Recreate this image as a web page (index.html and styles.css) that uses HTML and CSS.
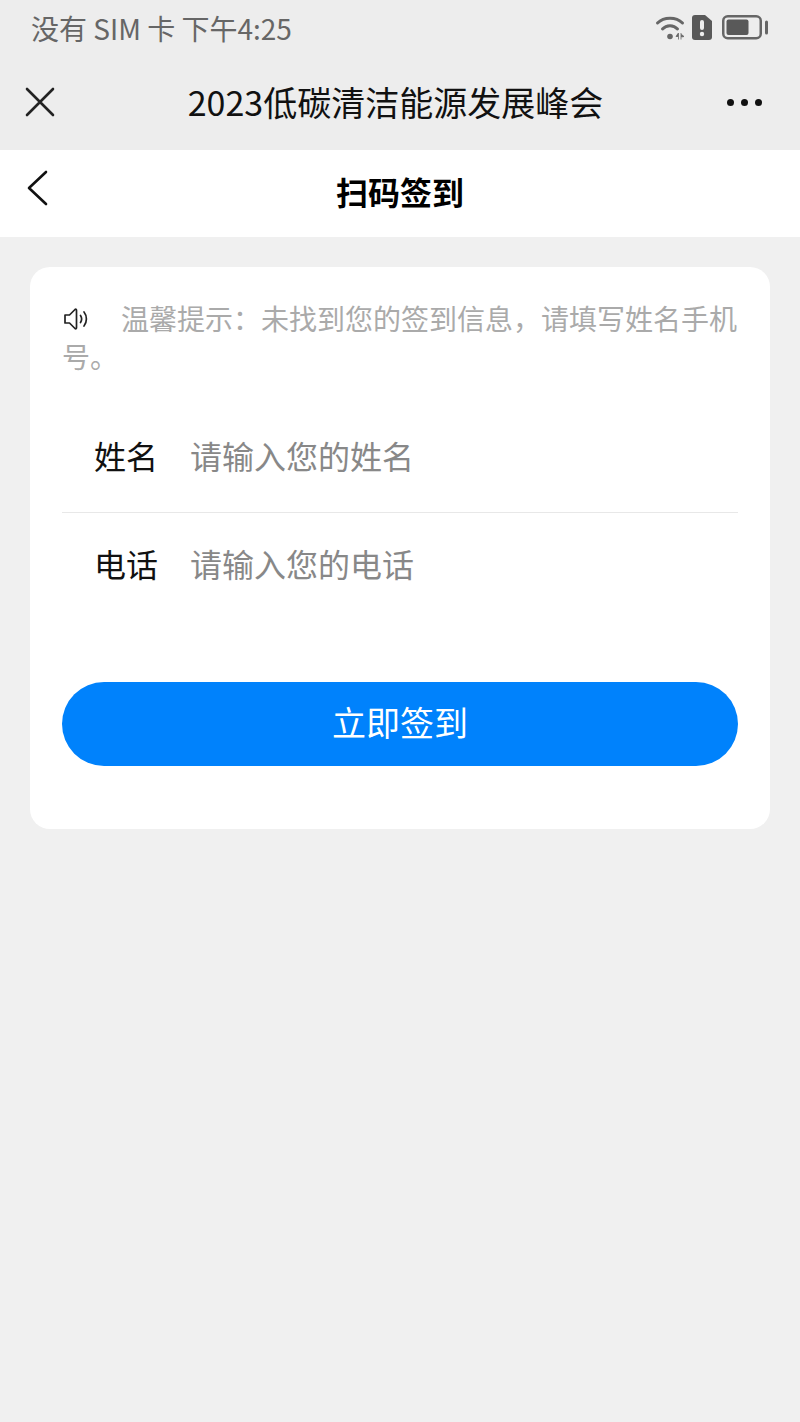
FILE: index.html
```html
<!DOCTYPE html>
<html lang="zh-cn">

<head>
  <meta charset="UTF-8">
  <title>扫码签到</title>
  <link rel="stylesheet" href="styles.css">
</head>

<body>
  <div class="top-bar">
    <div class="status-bar">
      <span class="status-text">没有 SIM 卡 下午4:25</span>
      <div class="status-icons">
        <svg class="icon-wifi" width="30" height="25" viewBox="0 0 30 25">
          <path d="M2.500 8C9 1.500 21 1.500 27.500 8" fill="none" stroke="#666" stroke-width="3" stroke-linecap="round"/>
          <path d="M7.500 14C11.500 9.500 18.500 9.500 22.500 14" fill="none" stroke="#666" stroke-width="3" stroke-linecap="round"/>
          <circle cx="15" cy="21.500" r="2.800" fill="#666"/>
          <path d="M23.500 18v6.500M23 21.500h-2l2-3zM26 18v6.500M26.500 19.500l2.500 2-2.500 .5z" fill="#666" stroke="#666" stroke-width=".8"/>
        </svg>
        <svg class="icon-sim" width="20" height="25" viewBox="0 0 20 25">
          <path d="M3 0h10l7 6v16a3 3 0 0 1-3 3H3a3 3 0 0 1-3-3V3a3 3 0 0 1 3-3z" fill="#595959"/>
          <rect x="8" y="5" width="4" height="10" rx="2" fill="#eee"/>
          <circle cx="10" cy="19" r="2.200" fill="#eee"/>
        </svg>
        <svg class="icon-battery" width="46" height="25" viewBox="0 0 46 25">
          <rect x="1.250" y="1.250" width="37.500" height="22" rx="4.500" fill="none" stroke="#666" stroke-width="2.500"/>
          <rect x="4.500" y="4.500" width="22" height="15.500" rx="2" fill="#595959"/>
          <rect x="43" y="5.500" width="3" height="14" rx="1.500" fill="#666"/>
        </svg>
      </div>
    </div>
    <div class="title-bar">
      <svg class="icon-close" width="30" height="30" viewBox="0 0 30 30">
        <path d="M2 2L28 28M28 2L2 28" fill="none" stroke="#222" stroke-width="2.600" stroke-linecap="round"/>
      </svg>
      <h1 class="app-title">2023低碳清洁能源发展峰会</h1>
      <div class="more-dots"><i></i><i></i><i></i></div>
    </div>
  </div>

  <div class="page-head">
    <svg class="icon-back" width="22" height="36" viewBox="0 0 22 36">
      <path d="M20 2L3 18L20 34" fill="none" stroke="#111" stroke-width="2.600" stroke-linecap="round" stroke-linejoin="round"/>
    </svg>
    <h2 class="page-title">扫码签到</h2>
  </div>

  <div class="card">
    <p class="notice">
      <svg class="icon-sound" width="26" height="26" viewBox="0 0 26 26">
        <path d="M2 9h4.500L12 3.500c.8-.6 1.500-.3 1.500 .7v17.600c0 1-.7 1.300-1.500 .7L6.500 17H2z" fill="none" stroke="#222" stroke-width="1.700" stroke-linejoin="round"/>
        <path d="M17.500 9.500c1.300 2 1.300 5 0 7M21 6c3.200 4 3.200 10 0 14" fill="none" stroke="#222" stroke-width="1.700" stroke-linecap="round"/>
      </svg>温馨提示：未找到您的签到信息，请填写姓名手机号。
    </p>

    <div class="form-row row-name">
      <label for="userName">姓名</label>
      <input id="userName" type="text" placeholder="请输入您的姓名">
    </div>
    <div class="form-row">
      <label for="userPhone">电话</label>
      <input id="userPhone" type="text" placeholder="请输入您的电话">
    </div>

    <button class="sign-btn">立即签到</button>
  </div>
</body>

</html>
```

FILE: styles.css
```css
body {
  margin: 0;
  padding: 0;
  height: 1422px;
  overflow: hidden;
  background-color: #f0f0f0;
  font-family: "Noto Sans CJK SC", "Liberation Sans", sans-serif;
}

.top-bar {
  height: 150px;
  background-color: #ededed;
}

.status-bar {
  display: flex;
  justify-content: space-between;
  align-items: center;
  height: 56px;
  padding: 0 32px 0 31px;
}

.status-text {
  font-size: 28px;
  line-height: 1;
  color: #666;
}

.status-icons {
  display: flex;
  align-items: center;
  gap: 7px;
  margin-bottom: 2px;
}

.icon-battery {
  margin-left: 3px;
}

.title-bar {
  display: flex;
  justify-content: space-between;
  align-items: center;
  height: 92px;
  padding: 0 38px 0 25px;
}

.app-title {
  margin: 0 0 0 9px;
  font-size: 34px;
  font-weight: 400;
  line-height: 1;
  color: #111;
}

.more-dots {
  display: flex;
  gap: 7px;
}

.more-dots i {
  width: 7px;
  height: 7px;
  border-radius: 50%;
  background-color: #111;
}

.page-head {
  position: relative;
  display: flex;
  justify-content: center;
  align-items: center;
  box-sizing: border-box;
  height: 87px;
  padding-bottom: 6px;
  background-color: #fff;
}

.icon-back {
  position: absolute;
  left: 26px;
  top: 20px;
}

.page-title {
  margin: 0;
  font-size: 32px;
  font-weight: 700;
  line-height: 1;
  color: #000;
}

.card {
  margin: 30px 30px 0;
  padding: 32px 32px 63px;
  background-color: #fff;
  border-radius: 20px;
}

.notice {
  margin: 0;
  font-size: 28px;
  line-height: 38px;
  color: #aaa;
}

.icon-sound {
  margin-right: 32px;
  margin-left: 1px;
  vertical-align: -2px;
}

.form-row {
  display: flex;
  align-items: center;
  box-sizing: border-box;
  height: 107px;
  padding: 0 0 7px 32px;
}

.row-name {
  height: 108px;
  margin-top: 30px;
  border-bottom: 1px solid #e8e8e8;
}

.form-row label {
  width: 96px;
  font-size: 32px;
  line-height: 1;
  color: #111;
}

.form-row input {
  flex: 1;
  border: 0;
  outline: 0;
  padding: 0;
  font-family: inherit;
  font-size: 32px;
  background: transparent;
}

.form-row input::placeholder {
  color: #888;
}

.sign-btn {
  display: block;
  width: 100%;
  height: 84px;
  margin-top: 62px;
  padding: 0 0 6px;
  border: 0;
  border-radius: 42px;
  background-color: #0082fc;
  color: #fff;
  font-family: inherit;
  font-size: 34px;
}
```
